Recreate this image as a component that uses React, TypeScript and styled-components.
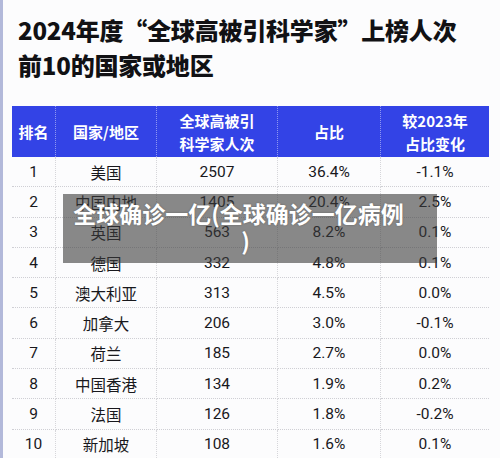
import React from "react";
import styled, { createGlobalStyle } from "styled-components";

const GlobalStyle = createGlobalStyle`
  html, body {
    margin: 0;
    padding: 0;
    background: #fbfbfd;
  }
  body {
    font-family: Roboto, "Noto Sans CJK SC", "Noto Sans", sans-serif;
  }
`;

interface Row {
  rank: number;
  region: string;
  count: number;
  share: string;
  change: string;
}

const rows: Row[] = [
  { rank: 1, region: "美国", count: 2507, share: "36.4%", change: "-1.1%" },
  { rank: 2, region: "中国内地", count: 1405, share: "20.4%", change: "2.5%" },
  { rank: 3, region: "英国", count: 563, share: "8.2%", change: "0.1%" },
  { rank: 4, region: "德国", count: 332, share: "4.8%", change: "0.1%" },
  { rank: 5, region: "澳大利亚", count: 313, share: "4.5%", change: "0.0%" },
  { rank: 6, region: "加拿大", count: 206, share: "3.0%", change: "-0.1%" },
  { rank: 7, region: "荷兰", count: 185, share: "2.7%", change: "0.0%" },
  { rank: 8, region: "中国香港", count: 134, share: "1.9%", change: "0.2%" },
  { rank: 9, region: "法国", count: 126, share: "1.8%", change: "-0.2%" },
  { rank: 10, region: "新加坡", count: 108, share: "1.6%", change: "0.1%" },
];

const Page = styled.div`
  position: relative;
  width: 500px;
  height: 458px;
  overflow: hidden;
  box-sizing: border-box;
  border-left: 3px solid #b3b9da;
  background: #fcfcfd;
`;

const Title = styled.h1`
  margin: 0;
  padding: 12px 0 0 15px;
  font-family: "Noto Sans CJK SC", sans-serif;
  font-size: 24px;
  line-height: 35px;
  font-weight: 900;
  color: #111114;
  letter-spacing: -0.2px;
`;

const Table = styled.div`
  display: grid;
  grid-template-columns: 44px 101px 121px 103px 108px;
  grid-template-rows: 51px;
  grid-auto-rows: 30.3px;
  margin: 24px 0 0 9px;
  width: 477px;
`;

const HeadCell = styled.div<{ $last?: boolean }>`
  display: flex;
  align-items: center;
  justify-content: center;
  text-align: center;
  background: #3343e6;
  color: #fff;
  font-family: "Noto Sans CJK SC", sans-serif;
  font-weight: 700;
  font-size: 15px;
  line-height: 23px;
  border-right: ${(p) => (p.$last ? "none" : "1px dotted rgba(255,255,255,0.45)")};
`;

const Cell = styled.div<{ $last?: boolean }>`
  display: flex;
  align-items: center;
  justify-content: center;
  color: #18181c;
  font-size: 15.5px;
  border-bottom: 1px dotted #cfcfd4;
  border-right: ${(p) => (p.$last ? "none" : "1px dotted #d6d6da")};
`;

const Banner = styled.div`
  position: absolute;
  left: 60px;
  top: 194px;
  width: 374px;
  height: 69px;
  box-sizing: border-box;
  padding: 0 32px 4px 9px;
  display: flex;
  align-items: center;
  justify-content: center;
  background: rgba(58, 58, 58, 0.6);
`;

const BannerText = styled.div`
  color: #fff;
  text-align: center;
  font-family: "Noto Sans CJK SC", sans-serif;
  font-weight: 700;
  font-size: 23px;
  line-height: 27px;
  white-space: nowrap;
  text-shadow: 0 0 2px rgba(0, 0, 0, 0.3);
`;

const Tail = styled.span`
  display: inline-block;
  margin-left: 14px;
`;

export default function App() {
  return (
    <>
      <GlobalStyle />
      <Page>
        <Title>
          2024年度“全球高被引科学家”上榜人次
          <br />
          前10的国家或地区
        </Title>
        <Table>
          <HeadCell>排名</HeadCell>
          <HeadCell>国家/地区</HeadCell>
          <HeadCell>
            全球高被引
            <br />
            科学家人次
          </HeadCell>
          <HeadCell>占比</HeadCell>
          <HeadCell $last>
            较2023年
            <br />
            占比变化
          </HeadCell>
          {rows.map((r) => (
            <React.Fragment key={r.rank}>
              <Cell>{r.rank}</Cell>
              <Cell>{r.region}</Cell>
              <Cell>{r.count}</Cell>
              <Cell>{r.share}</Cell>
              <Cell $last>{r.change}</Cell>
            </React.Fragment>
          ))}
        </Table>
        <Banner>
          <BannerText>
            全球确诊一亿(全球确诊一亿病例
            <br />
            <Tail>)</Tail>
          </BannerText>
        </Banner>
      </Page>
    </>
  );
}
